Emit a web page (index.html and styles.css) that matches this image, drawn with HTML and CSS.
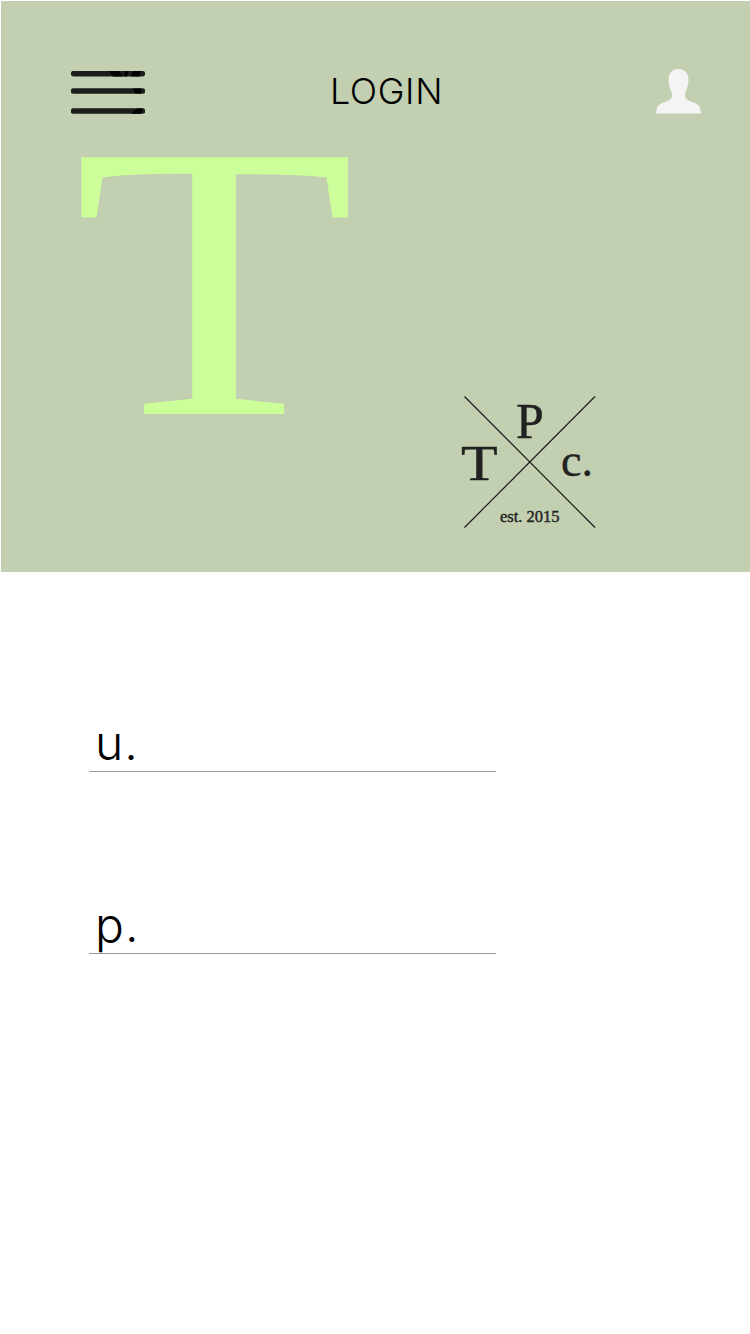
FILE: index.html
```html
<!DOCTYPE html>
<html>
  <head>
    <meta name="viewport" content="width=device-width,initial-scale=1.0">
    <title>Login</title>
    <link rel="stylesheet" href="styles.css">
  </head>

  <body>
    <!-- Green top panel -->
    <div class="hero">
      <div class="topbar">
        <svg class="menu-icon" width="74" height="44" viewBox="0 0 74 44">
          <g stroke="#1d1d1d" stroke-width="5.500" stroke-linecap="round">
            <line x1="2.500" y1="2.700" x2="71.500" y2="2.700" />
            <line x1="2.500" y1="20" x2="71.500" y2="20" />
            <line x1="2.500" y1="40" x2="71.500" y2="40" />
          </g>
          <path d="M38 0H48L52 5.500H42ZM54 0H58L56 5.500H53ZM62 0H70L68 5.500H60ZM62 17.500H70V22.500H64ZM60 42.800L66 37.500H72L70 42.800Z" fill="#000" />
        </svg>
        <span class="page-title">LOGIN</span>
        <svg class="user-icon" width="45" height="45" viewBox="0 0 45 45">
          <path d="M22.500 0C29 0 32.500 4.500 32.500 11C32.500 16 31 19 29.500 23C28.500 27 29 29 31 30.500C35 33 42 34 44 38.500L45 44.500H0L1 38.500C3 34 10 33 14 30.500C16 29 16.500 27 15.500 23C14 19 12.500 16 12.500 11C12.500 4.500 16 0 22.500 0Z" fill="#f4f4f4" />
        </svg>
      </div>
      <div class="hero-body">
        <div class="big-letter">T</div>
        <!-- Company stamp -->
        <div class="stamp">
          <svg width="132" height="132" viewBox="0 0 132 132">
            <line x1="0.500" y1="0.500" x2="131" y2="131.500" stroke="#1d1d1d" stroke-width="1.200" />
            <line x1="131" y1="0.500" x2="0.500" y2="131.500" stroke="#1d1d1d" stroke-width="1.200" />
          </svg>
          <span class="stamp-p">P</span>
          <span class="stamp-t">T</span>
          <span class="stamp-c">c.</span>
          <span class="stamp-est">est. 2015</span>
        </div>
      </div>
    </div>

    <!-- Login form -->
    <form class="login-form" action="">
      <div class="field">u.</div>
      <div class="field">p.</div>
    </form>
  </body>
</html>
```

FILE: styles.css
```css
body {
  margin: 0;
  background: #fff;
  font-family: Inter, "Noto Sans", sans-serif;
}

.hero {
  margin: 1px 0 0 1px;
  height: 571px;
  background: #c2cfb0;
  overflow: hidden;
}

.topbar {
  display: flex;
  align-items: flex-start;
  justify-content: space-between;
  padding: 68px 49px 0 70px;
}

.menu-icon {
  margin-top: 2px;
}

.page-title {
  margin-right: 28px;
  font-size: 36px;
  font-weight: 300;
  letter-spacing: 0.6px;
  line-height: 44px;
  color: #000;
}

.hero-body {
  position: relative;
  height: 418px;
  padding-top: 37px;
}

.big-letter {
  width: 270px;
  height: 260px;
  margin-left: 72px;
  font-family: "Liberation Serif", serif;
  font-size: 392px;
  line-height: 260px;
  color: #ccff99;
  transform: scaleX(1.18);
  transform-origin: left top;
}

.stamp {
  position: absolute;
  left: 463px;
  top: 281px;
  width: 132px;
  height: 132px;
  font-family: "Liberation Serif", serif;
  color: #222;
}

.stamp svg {
  display: block;
}

.stamp span {
  position: absolute;
  line-height: 1;
  -webkit-text-stroke: 0.4px #222;
}

.stamp-p {
  left: 52px;
  top: 0;
  font-size: 50px;
}

.stamp-t {
  left: -3px;
  top: 42px;
  font-size: 50px;
  transform: scaleX(1.2);
  transform-origin: left top;
}

.stamp-c {
  left: 97px;
  top: 42px;
  font-size: 46px;
}

.stamp-est {
  left: 36px;
  top: 113px;
  font-size: 16.500px;
  white-space: nowrap;
  -webkit-text-stroke: 0;
}

.login-form {
  padding: 139px 0 0 89px;
}

.field {
  box-sizing: border-box;
  width: 407px;
  height: 61px;
  margin-bottom: 121px;
  padding-left: 6px;
  border-bottom: 1px solid #999;
  font-size: 48px;
  font-weight: 300;
  letter-spacing: 1px;
  line-height: 63px;
  color: #000;
}
```
